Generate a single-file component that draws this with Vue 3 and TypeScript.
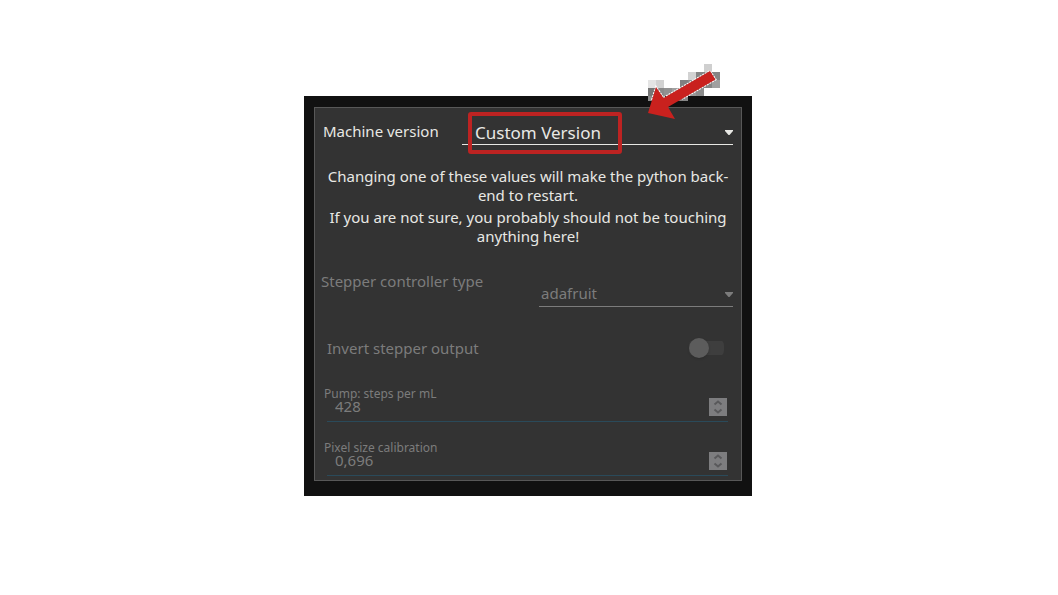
<script setup lang="ts">
import { ref } from 'vue'

interface NumberField {
  id: string
  label: string
  value: string
}

interface Cell {
  x: number
  y: number
  fill: string
}

const machine = ref('Custom Version')
const controller = ref('adafruit')
const inverted = ref(false)

const fields = ref<NumberField[]>([
  { id: 'pump-steps', label: 'Pump: steps per mL', value: '428' },
  { id: 'pixel-size', label: 'Pixel size calibration', value: '0,696' },
])

// Blocky shadow behind the arrow, on an 8px grid
const cells: Cell[] = [
  { x: 56, y: 0, fill: '#cfcfcf' },
  { x: 40, y: 8, fill: '#d2d2d2' },
  { x: 48, y: 8, fill: '#858585' },
  { x: 56, y: 8, fill: '#858585' },
  { x: 64, y: 8, fill: '#858585' },
  { x: 0, y: 16, fill: '#e4e4e4' },
  { x: 8, y: 16, fill: '#d2d2d2' },
  { x: 32, y: 16, fill: '#808080' },
  { x: 40, y: 16, fill: '#8c8c8c' },
  { x: 48, y: 16, fill: '#777777' },
  { x: 56, y: 16, fill: '#858585' },
  { x: 64, y: 16, fill: '#a0a0a0' },
  { x: 0, y: 24, fill: '#767676' },
  { x: 8, y: 24, fill: '#8a8a8a' },
  { x: 16, y: 24, fill: '#919191' },
  { x: 24, y: 24, fill: '#a0a0a0' },
  { x: 32, y: 24, fill: '#7c7c7c' },
  { x: 40, y: 24, fill: '#989898' },
  { x: 48, y: 24, fill: '#8c8c8c' },
  { x: 0, y: 32, fill: '#8c8c8c' },
  { x: 24, y: 32, fill: '#777777' },
  { x: 32, y: 32, fill: '#858585' },
]
</script>

<template>
  <main class="page">
    <section class="frame">
      <form class="panel" @submit.prevent>
        <div class="machine">
          <label for="machine">Machine version</label>
          <div class="select">
            <select id="machine" v-model="machine">
              <option>Custom Version</option>
            </select>
            <svg class="caret" viewBox="0 0 8 5" aria-hidden="true"><path d="M0 0h8v1L4.500 5h-1L0 1z" /></svg>
            <span class="highlight"></span>
          </div>
        </div>

        <div class="notice">
          <p>Changing one of these values will make the python back-<br />end to restart.</p>
          <p>If you are not sure, you probably should not be touching<br />anything here!</p>
        </div>

        <div class="controller">
          <label for="controller">Stepper controller type</label>
          <div class="select">
            <select id="controller" v-model="controller" disabled>
              <option>adafruit</option>
            </select>
            <svg class="caret" viewBox="0 0 8 5" aria-hidden="true"><path d="M0 0h8v1L4.500 5h-1L0 1z" /></svg>
          </div>
        </div>

        <div class="invert">
          <label for="invert">Invert stepper output</label>
          <input id="invert" v-model="inverted" class="switch" type="checkbox" role="switch" disabled />
        </div>

        <div v-for="field in fields" :key="field.id" class="field">
          <label :for="field.id">{{ field.label }}</label>
          <div class="entry">
            <input :id="field.id" v-model="field.value" type="text" inputmode="decimal" disabled />
            <button type="button" disabled :aria-label="'Adjust ' + field.label">
              <svg viewBox="0 0 18 18" aria-hidden="true">
                <path d="M5.500 6.500L9 3.500l3.500 3M5.500 11.500l3.500 3 3.500-3" />
              </svg>
            </button>
          </div>
        </div>
      </form>

      <svg class="arrow" viewBox="0 0 72 56" aria-hidden="true">
        <g shape-rendering="crispEdges">
          <rect v-for="cell in cells" :key="cell.x + '-' + cell.y" :x="cell.x" :y="cell.y" width="8" :height="cell.y === 32 ? 5 : 8" :fill="cell.fill" />
        </g>
        <path d="M4 36L8 23L15.500 34L62 7L67.500 15.500L34 35" class="edge" />
        <path d="M0 49L8 23l7.500 11L62 7l5.500 8.500L20 43l7 12z" fill="#c9211e" />
      </svg>
    </section>
  </main>
</template>

<style>
body {
  margin: 0;
  background: #fff;
}
</style>

<style scoped>
* {
  box-sizing: border-box;
}

.page {
  display: flex;
  justify-content: center;
  padding: 96px 2px 96px 0;
  font-family: "Noto Sans", "Open Sans", sans-serif;
  font-size: 15px;
  line-height: 19px;
}

.frame {
  position: relative;
  width: 100%;
  max-width: 448px;
  padding: 11px 10px 15px;
  background: #111;
}

.panel {
  padding: 0 8px 4px;
  border: 1px solid #585858;
  background: #333;
  color: #7c7c7c;
}

.machine {
  display: flex;
  align-items: center;
  justify-content: space-between;
  padding-top: 13px;
  color: #e8e8e4;
}

.machine label {
  padding-bottom: 4px;
}

.select {
  position: relative;
}

.machine .select {
  width: 271px;
}

.select select {
  display: block;
  width: 100%;
  height: 24px;
  margin: 0;
  padding: 0 16px 2px 2px;
  appearance: none;
  border: 0;
  border-bottom: 1px solid currentColor;
  border-radius: 0;
  background: transparent;
  color: inherit;
  font: inherit;
  opacity: 1;
}

.machine select {
  padding: 0 16px 0 13px;
  font-size: 17px;
}

.caret {
  position: absolute;
  top: 9px;
  right: 0;
  width: 8px;
  height: 5px;
  fill: currentColor;
}

.highlight {
  position: absolute;
  top: -9px;
  left: 6px;
  width: 154px;
  height: 42px;
  border: 4px solid #bd2322;
  border-radius: 3px;
  pointer-events: none;
}

.notice {
  display: grid;
  gap: 3px;
  padding-top: 22px;
  color: #e8e8e4;
  text-align: center;
  white-space: nowrap;
}

.notice p {
  margin: 0;
}

.controller {
  display: flex;
  align-items: flex-start;
  justify-content: space-between;
  margin-left: -2px;
  padding-top: 26px;
}

.controller .select {
  width: 194px;
  padding-top: 11px;
}

.controller .caret {
  top: 20px;
}

.invert {
  display: flex;
  align-items: center;
  justify-content: space-between;
  padding: 31px 9px 0 4px;
}

.switch {
  display: flex;
  align-items: center;
  width: 35px;
  height: 20px;
  margin: 0;
  appearance: none;
  background: linear-gradient(#3e3e3e, #3e3e3e) center / 100% 14px no-repeat;
  border-radius: 8px;
}

.switch::before {
  content: "";
  width: 20px;
  height: 20px;
  border-radius: 50%;
  background: #5c5c5c;
  box-shadow: 0 1px 2px #2226;
}

.field {
  padding-top: 27px;
}

.field + .field {
  padding-top: 17px;
}

.field label {
  display: block;
  height: 12px;
  padding-left: 1px;
  font-size: 12px;
  line-height: 17px;
}

.entry {
  display: flex;
  align-items: flex-start;
  justify-content: space-between;
  height: 25px;
  margin: 0 5px 0 4px;
  padding-right: 1px;
  border-bottom: 1px solid #2a4a5a;
}

.entry input {
  flex: 1;
  min-width: 0;
  height: 19px;
  margin: 0;
  padding: 0 8px;
  border: 0;
  background: transparent;
  color: inherit;
  font: inherit;
}

.entry button {
  width: 18px;
  height: 18px;
  margin-top: 1px;
  padding: 0;
  border: 0;
  background: #7d7d7f;
}

.entry svg {
  display: block;
  width: 18px;
  height: 18px;
  fill: none;
  stroke: #59595b;
  stroke-width: 2;
}

.arrow {
  position: absolute;
  top: -32px;
  right: 32px;
  width: 72px;
  height: 56px;
}

.edge {
  fill: none;
  stroke: #fff;
  stroke-width: 2;
  stroke-dasharray: 2 1;
}
</style>
